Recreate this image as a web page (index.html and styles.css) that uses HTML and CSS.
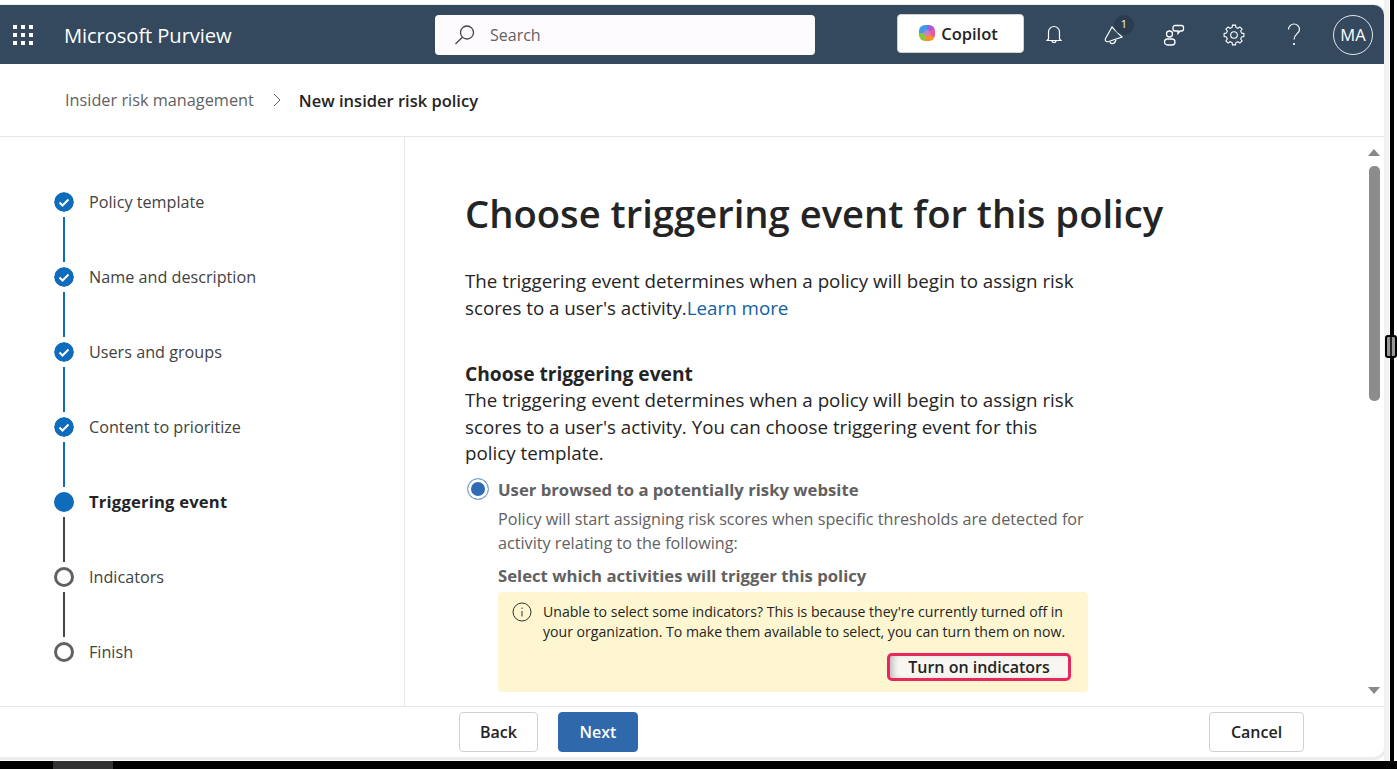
FILE: index.html
```html
<!DOCTYPE html>
<html lang="en">
<head>
    <meta charset="UTF-8">
    <title>New insider risk policy - Microsoft Purview</title>
    <link rel="stylesheet" href="styles.css">
</head>
<body>
<div class="desk">
    <div class="window">
        <header class="topbar">
            <div class="brand">
                <svg class="waffle" width="20" height="20" viewBox="0 0 20 20" fill="#fff">
                    <rect x="0" y="0" width="4" height="4"/><rect x="8" y="0" width="4" height="4"/><rect x="16" y="0" width="4" height="4"/>
                    <rect x="0" y="8" width="4" height="4"/><rect x="8" y="8" width="4" height="4"/><rect x="16" y="8" width="4" height="4"/>
                    <rect x="0" y="16" width="4" height="4"/><rect x="8" y="16" width="4" height="4"/><rect x="16" y="16" width="4" height="4"/>
                </svg>
                <span class="brand-name">Microsoft Purview</span>
            </div>
            <div class="search">
                <svg width="22" height="22" viewBox="0 0 22 22" fill="none" stroke="#444" stroke-width="1.3">
                    <circle cx="13" cy="8.5" r="6.5"/>
                    <path d="M8.3 13.2 1.5 20"/>
                </svg>
                <span>Search</span>
            </div>
            <div class="copilot">
                <div class="copilot-logo"></div>
                <span>Copilot</span>
            </div>
            <div class="icons">
                <div class="icon-btn">
                    <svg width="16" height="20" viewBox="0 0 16 20" fill="none" stroke="#fff" stroke-width="1.2">
                        <path d="M2.500 14V7a5.500 5.500 0 0 1 11 0v7l1.500 1.500H1z"/>
                        <path d="M6 15.500a2 2 0 0 0 4 0"/>
                    </svg>
                </div>
                <div class="icon-btn">
                    <svg width="20" height="22" viewBox="0 0 20 22" fill="none" stroke="#fff" stroke-width="1.2">
                        <path d="M8 3 1.500 14.500c-1 2 .5 3.500 2.500 3.200L18 13z"/>
                        <path d="M6 17.800c.5 2.500 4.500 3 6-1.800"/>
                    </svg>
                    <span class="badge">1</span>
                </div>
                <div class="icon-btn">
                    <svg width="22" height="22" viewBox="0 0 22 22" fill="none" stroke="#fff" stroke-width="1.3">
                        <circle cx="6.500" cy="10" r="3"/>
                        <rect x="1.500" y="15" width="10.500" height="6" rx="3"/>
                        <path d="M12 1.500h6.500a2 2 0 0 1 2 2v1.500a2 2 0 0 1-2 2h-1.500l-2 2.500V7h-3a2 2 0 0 1-2-2V3.500a2 2 0 0 1 2-2z"/>
                    </svg>
                </div>
                <div class="icon-btn">
                    <svg width="22" height="22" viewBox="0 0 22 22" fill="none" stroke="#fff" stroke-width="1.1">
                        <circle cx="11" cy="11" r="3.300"/>
                        <polygon points="18.57,9.11 20.88,9.44 20.88,12.56 18.57,12.89 17.69,15.02 19.09,16.88 16.88,19.09 15.02,17.69 12.89,18.57 12.56,20.88 9.44,20.88 9.11,18.57 6.98,17.69 5.12,19.09 2.91,16.88 4.31,15.02 3.43,12.89 1.12,12.56 1.12,9.44 3.43,9.11 4.31,6.98 2.91,5.12 5.12,2.91 6.98,4.31 9.11,3.43 9.44,1.12 12.56,1.12 12.89,3.43 15.02,4.31 16.88,2.91 19.09,5.12 17.69,6.98"/>
                    </svg>
                </div>
                <div class="icon-btn">
                    <svg width="14" height="24" viewBox="0 0 14 24" fill="none" stroke="#fff" stroke-width="1.200">
                        <path d="M1.500 6.500a5.500 5.500 0 0 1 11 0c0 4-5.500 4.500-5.500 10"/>
                        <circle cx="7" cy="21" r=".5" fill="#fff"/>
                    </svg>
                </div>
            </div>
            <div class="avatar">MA</div>
        </header>

        <nav class="crumbs">
            <span class="crumb-link">Insider risk management</span>
            <svg class="crumb-sep" width="8" height="14" viewBox="0 0 8 14" fill="none" stroke="#616161" stroke-width="1">
                <path d="M1 1l6 6-6 6"/>
            </svg>
            <span class="crumb-now">New insider risk policy</span>
        </nav>

        <div class="middle">
            <aside class="steps">
                <div class="step">
                    <div class="mark">
                        <svg class="dot" width="20" height="20" viewBox="0 0 20 20"><circle cx="10" cy="10" r="10" fill="#0f6cbd"/><path d="M5.500 10.500l3 3 6-6" fill="none" stroke="#fff" stroke-width="2"/></svg>
                        <div class="link link-done"></div>
                    </div>
                    <span class="step-name">Policy template</span>
                </div>
                <div class="step">
                    <div class="mark">
                        <svg class="dot" width="20" height="20" viewBox="0 0 20 20"><circle cx="10" cy="10" r="10" fill="#0f6cbd"/><path d="M5.500 10.500l3 3 6-6" fill="none" stroke="#fff" stroke-width="2"/></svg>
                        <div class="link link-done"></div>
                    </div>
                    <span class="step-name">Name and description</span>
                </div>
                <div class="step">
                    <div class="mark">
                        <svg class="dot" width="20" height="20" viewBox="0 0 20 20"><circle cx="10" cy="10" r="10" fill="#0f6cbd"/><path d="M5.500 10.500l3 3 6-6" fill="none" stroke="#fff" stroke-width="2"/></svg>
                        <div class="link link-done"></div>
                    </div>
                    <span class="step-name">Users and groups</span>
                </div>
                <div class="step">
                    <div class="mark">
                        <svg class="dot" width="20" height="20" viewBox="0 0 20 20"><circle cx="10" cy="10" r="10" fill="#0f6cbd"/><path d="M5.500 10.500l3 3 6-6" fill="none" stroke="#fff" stroke-width="2"/></svg>
                        <div class="link link-done"></div>
                    </div>
                    <span class="step-name">Content to prioritize</span>
                </div>
                <div class="step">
                    <div class="mark">
                        <div class="dot dot-now"></div>
                        <div class="link"></div>
                    </div>
                    <span class="step-name step-now">Triggering event</span>
                </div>
                <div class="step">
                    <div class="mark">
                        <div class="dot dot-todo"></div>
                        <div class="link"></div>
                    </div>
                    <span class="step-name">Indicators</span>
                </div>
                <div class="step">
                    <div class="mark">
                        <div class="dot dot-todo"></div>
                    </div>
                    <span class="step-name">Finish</span>
                </div>
            </aside>

            <main class="content">
                <div class="page">
                    <h1>Choose triggering event for this policy</h1>
                    <p class="lead">The triggering event determines when a policy will begin to assign risk scores to a user's activity.<a href="#">Learn more</a></p>
                    <h2>Choose triggering event</h2>
                    <p class="lead-sub">The triggering event determines when a policy will begin to assign risk scores to a user's activity. You can choose triggering event for this policy template.</p>
                    <div class="option">
                        <div class="radio"></div>
                        <div class="option-body">
                            <div class="option-name">User browsed to a potentially risky website</div>
                            <p class="option-text">Policy will start assigning risk scores when specific thresholds are detected for activity relating to the following:</p>
                            <div class="option-head">Select which activities will trigger this policy</div>
                            <div class="notice">
                                <div class="notice-row">
                                    <svg class="notice-icon" width="20" height="20" viewBox="0 0 20 20" fill="none" stroke="#333" stroke-width="1">
                                        <circle cx="10" cy="10" r="9"/>
                                        <path d="M10 9v5.500M10 5.500v1.500"/>
                                    </svg>
                                    <p>Unable to select some indicators? This is because they're currently turned off in your organization. To make them available to select, you can turn them on now.</p>
                                </div>
                                <div class="notice-foot">
                                    <button class="turn-on">Turn on indicators</button>
                                </div>
                            </div>
                        </div>
                    </div>
                </div>
                <div class="scrollbar">
                    <div class="arrow-up"></div>
                    <div class="thumb"></div>
                    <div class="arrow-down"></div>
                </div>
            </main>
        </div>

        <footer class="actions">
            <button class="btn">Back</button>
            <button class="btn btn-primary">Next</button>
            <button class="btn btn-cancel">Cancel</button>
        </footer>
    </div>
    <div class="edge"></div>
    <div class="edge-line"></div>
    <div class="handle"></div>
</div>
<div class="taskbar"><div class="taskbar-item"></div></div>
</body>
</html>
```

FILE: styles.css
```css
*{
    margin: 0;
    padding: 0;
    box-sizing: border-box;
}
html, body{
    height: 769px;
    overflow: hidden;
}
body{
    background: #fff;
    font-family: "Open Sans", "Noto Sans", sans-serif;
    color: #242424;
    display: flex;
    flex-direction: column;
}
.desk{
    display: flex;
    height: 761px;
    position: relative;
}
.window{
    width: 1384px;
    height: 752px;
    margin-top: 5px;
    background: #fff;
    border-radius: 0 10px 10px 0;
    box-shadow: 0 1px 0 2px #ececec;
    display: flex;
    flex-direction: column;
    overflow: hidden;
}
.edge{
    width: 5px;
    background: #f2f2f2;
}
.edge-line{
    width: 4px;
    margin-left: 1px;
    background: #000;
}
.handle{
    position: absolute;
    left: 1385px;
    top: 335px;
    width: 12px;
    height: 23px;
    background: linear-gradient(90deg, #999 0 3px, #222 3px 5px, #999 5px);
    border: 2px solid #000;
    border-radius: 3px;
}
.taskbar{
    height: 8px;
    background: #000;
}
.taskbar-item{
    width: 60px;
    height: 8px;
    margin-left: 53px;
    background: #333;
}

/* top bar */
.topbar{
    height: 59px;
    flex: none;
    background: #34495e;
    display: flex;
    align-items: center;
    color: #fff;
}
.brand{
    width: 435px;
    display: flex;
    align-items: center;
    padding-left: 13px;
}
.brand-name{
    margin-left: 31px;
    font-size: 20.200px;
    font-weight: 500;
    letter-spacing: -.1px;
}
.search{
    width: 380px;
    height: 40px;
    background: #fdfbfd;
    border-radius: 4px;
    display: flex;
    align-items: center;
    padding-left: 19px;
    color: #616161;
    font-size: 16px;
}
.search span{
    margin-left: 14px;
}
.copilot{
    width: 127px;
    height: 39px;
    margin-left: 82px;
    margin-top: -3px;
    padding-right: 4px;
    background: #fff;
    border: 1px solid #d1d1d1;
    border-radius: 4px;
    display: flex;
    align-items: center;
    justify-content: center;
    gap: 6px;
    color: #242424;
    font-size: 16.500px;
    font-weight: 600;
}
.copilot-logo{
    width: 16px;
    height: 16px;
    border-radius: 6px;
    background:
        radial-gradient(circle, #c77dd8 0 2px, transparent 4px),
        conic-gradient(#a25ddc 0 60deg, #ee5a8f 60deg 120deg, #f7902c 120deg 200deg, #8cc63f 200deg 270deg, #3f9be8 270deg 360deg);
}
.icons{
    display: flex;
}
.icon-btn{
    width: 60px;
    height: 40px;
    display: flex;
    align-items: center;
    justify-content: center;
    position: relative;
}
.badge{
    position: absolute;
    left: 30px;
    top: 0;
    width: 20px;
    height: 20px;
    border-radius: 50%;
    background: #2b3c4e;
    font-size: 11px;
    line-height: 18px;
    text-align: center;
}
.avatar{
    width: 40px;
    height: 40px;
    margin-left: 9px;
    border: 1px solid #e4e8ec;
    border-radius: 50%;
    font-size: 16.500px;
    line-height: 38px;
    text-align: center;
}

/* breadcrumb */
.crumbs{
    height: 73px;
    flex: none;
    border-bottom: 1px solid #e6e6e6;
    display: flex;
    align-items: center;
    padding-left: 65px;
    font-size: 16.300px;
}
.crumb-link{
    color: #616161;
}
.crumb-sep{
    margin: 0 18px 0 19px;
}
.crumb-now{
    font-size: 16.500px;
    font-weight: 600;
}

.middle{
    flex: 1;
    min-height: 0;
    display: flex;
}

/* wizard steps */
.steps{
    width: 405px;
    flex: none;
    border-right: 1px solid #e6e6e6;
    padding: 55px 0 0 54px;
}
.step{
    height: 75px;
    display: flex;
    gap: 15px;
}
.mark{
    width: 20px;
    display: flex;
    flex-direction: column;
    align-items: center;
}
.dot{
    display: block;
    width: 20px;
    height: 20px;
    flex: none;
    border-radius: 50%;
}
.dot-now{
    background: #0f6cbd;
}
.dot-todo{
    border: 3px solid #616161;
}
.link{
    width: 2px;
    height: 45px;
    margin-top: 5px;
    background: #444;
}
.link-done{
    background: #0f6cbd;
}
.step-name{
    font-size: 16.200px;
    line-height: 20px;
    color: #424242;
}
.step-now{
    font-size: 16.600px;
    font-weight: 700;
    letter-spacing: .2px;
    color: #242424;
}

/* right side */
.content{
    flex: 1;
    display: flex;
    min-width: 0;
}
.page{
    flex: 1;
    overflow: hidden;
    padding: 47px 0 0 60px;
}
h1{
    font-size: 38.200px;
    line-height: 58px;
    font-weight: 600;
    white-space: nowrap;
}
.lead{
    width: 620px;
    margin-top: 26px;
    font-size: 18.750px;
    line-height: 26.500px;
}
.lead a{
    color: #115ea3;
    text-decoration: none;
}
h2{
    margin-top: 40px;
    font-size: 19.200px;
    line-height: 26px;
    font-weight: 700;
}
.lead-sub{
    width: 620px;
    font-size: 18.750px;
    line-height: 26.500px;
}
.option{
    display: flex;
    margin-top: 11px;
    padding-left: 2px;
    color: #616161;
}
.radio{
    width: 22px;
    height: 22px;
    flex: none;
    border-radius: 50%;
    border: 1px solid #7fa8d8;
    background: #2f6cb3;
    box-shadow: inset 0 0 0 3px #fff;
}
.option-body{
    width: 590px;
    margin-left: 9px;
}
.option-name{
    font-size: 16.700px;
    line-height: 24px;
    font-weight: 700;
}
.option-text{
    margin-top: 5px;
    font-size: 16.200px;
    line-height: 24px;
}
.option-head{
    margin-top: 9px;
    font-size: 16.700px;
    line-height: 24px;
    font-weight: 700;
}
.notice{
    height: 100px;
    margin-top: 4px;
    background: #fdf6d0;
    border-radius: 4px;
    padding: 10px 17px 0 14px;
    color: #242424;
}
.notice-row{
    display: flex;
    gap: 11px;
}
.notice-icon{
    flex: none;
}
.notice-row p{
    font-size: 14.100px;
    line-height: 20px;
}
.notice-foot{
    display: flex;
    justify-content: flex-end;
    margin-top: 11px;
}
.turn-on{
    width: 184px;
    height: 28px;
    border: 3px solid #e8275f;
    border-radius: 5px;
    background: #f8f6f0;
    box-shadow: inset 6px 0 6px -3px #bbb;
    font-family: inherit;
    font-size: 16px;
    font-weight: 600;
    color: #242424;
}

/* fake scrollbar */
.scrollbar{
    width: 20px;
    flex: none;
    padding-top: 12px;
    display: flex;
    flex-direction: column;
    align-items: center;
}
.arrow-up{
    width: 0;
    height: 0;
    border: 6px solid transparent;
    border-top: 0;
    border-bottom: 7px solid #888;
}
.thumb{
    width: 11px;
    height: 235px;
    margin-top: 10px;
    border-radius: 5px;
    background: #8c8c8c;
}
.arrow-down{
    width: 0;
    height: 0;
    margin-top: 286px;
    border: 6px solid transparent;
    border-bottom: 0;
    border-top: 7px solid #888;
}

/* footer */
.actions{
    height: 51px;
    flex: none;
    border-top: 1px solid #e6e6e6;
    display: flex;
    align-items: center;
    padding: 0 80px 0 459px;
}
.btn{
    width: 79px;
    height: 40px;
    background: #fff;
    border: 1px solid #d1d1d1;
    border-radius: 4px;
    font-family: inherit;
    font-size: 16px;
    font-weight: 600;
    color: #242424;
}
.btn-primary{
    width: 80px;
    margin-left: 20px;
    background: #2f69ab;
    border-color: #2f69ab;
    color: #fff;
}
.btn-cancel{
    width: 95px;
    margin-left: auto;
}
```
